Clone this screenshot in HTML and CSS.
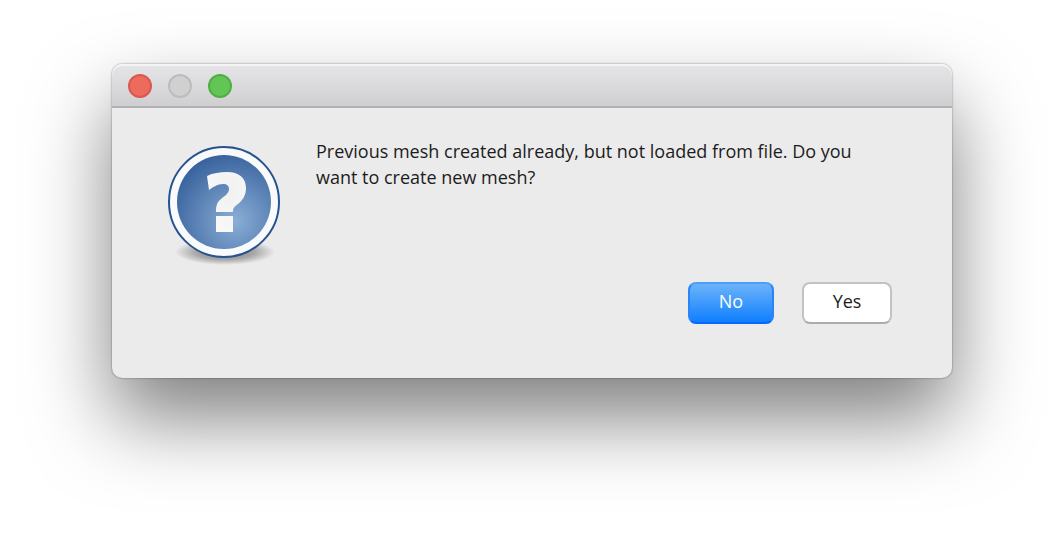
FILE: index.html
```
<!DOCTYPE html>
<html lang="en">
<head>
<meta charset="utf-8">
<title>Mesh</title>
<link rel="stylesheet" href="styles.css">
</head>
<body>
<main class="dialog" role="dialog" aria-describedby="message">
  <header class="titlebar">
    <button class="light close" aria-label="Close"></button>
    <button class="light minimise" aria-label="Minimise" disabled></button>
    <button class="light zoom" aria-label="Zoom"></button>
  </header>
  <div class="content">
    <svg class="icon" viewBox="0 0 128 128" aria-hidden="true">
      <defs>
        <radialGradient id="shade"><stop offset="0" stop-color="#000" stop-opacity=".5"/><stop offset=".6" stop-color="#000" stop-opacity=".28"/><stop offset="1" stop-color="#000" stop-opacity="0"/></radialGradient>
        <radialGradient id="disc" cx=".62" cy=".7" r=".72"><stop offset="0" stop-color="#8aaed6"/><stop offset="1" stop-color="#3a639e"/></radialGradient>
        <radialGradient id="mark" cx=".6" cy=".3" r=".7"><stop offset="0" stop-color="#f1f1f1"/><stop offset="1" stop-color="#f8f8f8"/></radialGradient>
      </defs>
      <ellipse cx="65" cy="113" rx="50" ry="13" fill="url(#shade)"/>
      <circle cx="64" cy="63" r="55" fill="#f8fafc" stroke="#28528f" stroke-width="2"/>
      <circle cx="64" cy="63" r="47" fill="url(#disc)"/>
      <path d="M47 37C53 34 60 33 67 33C79 33 86 39 86 49C86 56 83 61 78 65C74 68 73 69 73 73H56C56 67 57 63 61 60C66 56 69 54 69 50C69 47 67 45 63 45C58 45 53 48 49 51ZM56 77H73V93H56Z" fill="url(#mark)"/>
    </svg>
    <div class="body">
      <p class="message" id="message">Previous mesh created already, but not loaded from file. Do you want to create new mesh?</p>
      <div class="actions">
        <button class="button primary">No</button>
        <button class="button">Yes</button>
      </div>
    </div>
  </div>
</main>
</body>
</html>
```
FILE: styles.css
```
* { box-sizing: border-box; }
body {
  margin: 0;
  min-height: 100vh;
  padding: 64px 112px 160px;
  background: #fff;
  font: 18px/26px "Open Sans", sans-serif;
  color: #1c1c1c;
}
.dialog {
  background: #ebebeb;
  border-radius: 10px;
  box-shadow: 0 0 2px rgba(0,0,0,.5), 0 40px 80px rgba(0,0,0,.5);
}
.titlebar {
  display: flex;
  align-items: center;
  gap: 16px;
  height: 44px;
  padding: 2px 16px 0;
  border-bottom: 2px solid #b1b1b3;
  border-radius: 10px 10px 0 0;
  background: linear-gradient(#e6e6e8, #cfcfd1);
  box-shadow: inset 0 2px #f4f4f4;
}
.light {
  width: 24px;
  height: 24px;
  padding: 0;
  border: 2px solid;
  border-radius: 50%;
}
.close { background: #ed6a5f; border-color: #d9594f; }
.minimise { background: #d0d0d0; border-color: #bcbcbe; }
.zoom { background: #62c655; border-color: #53ad46; }
.content {
  display: flex;
  gap: 28px;
  padding: 31px 60px 54px 48px;
}
.icon { flex: none; width: 128px; height: 128px; }
.body {
  flex: 1;
  display: flex;
  flex-direction: column;
  justify-content: space-between;
  min-height: 186px;
  margin-top: -1px;
}
.message { margin: 0; }
.actions { display: flex; justify-content: flex-end; gap: 28px; }
.button {
  width: 90px;
  height: 42px;
  padding: 0 0 4px;
  border: 2px solid #c2c2c2;
  border-bottom-color: #acacac;
  border-radius: 8px;
  background: #fff;
  font: inherit;
  color: #1c1c1c;
}
.primary {
  width: 86px;
  border-color: #4a9ff8 #2a84f8 #0a66fc;
  background: linear-gradient(#6cb3fa, #107fff);
  color: #fff;
}
```
